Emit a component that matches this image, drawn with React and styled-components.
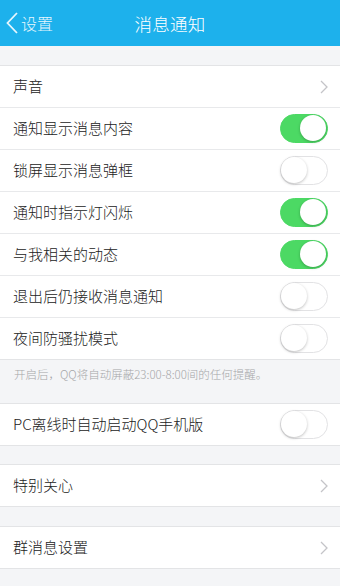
import React, { useState } from 'react'
import styled, { createGlobalStyle } from 'styled-components'

const GlobalStyle = createGlobalStyle`
  body {
    margin: 0;
    background: #f4f5f7;
    font-family: "Noto Sans CJK SC", "Noto Sans", sans-serif;
    font-weight: 300;
  }
`

const Page = styled.div`
  width: 340px;
  min-height: 586px;
  background: #f4f5f7;
`

const Header = styled.div`
  height: 46px;
  background: #1db1ec;
  display: flex;
  align-items: center;
  justify-content: center;
  position: relative;
  color: #fff;
`

const Back = styled.div`
  position: absolute;
  left: 6px;
  top: 0;
  height: 46px;
  display: flex;
  align-items: center;
  gap: 3px;
  font-size: 16px;
  color: #e6f6fd;
`

const Title = styled.div`
  font-size: 17.5px;
  letter-spacing: 0.3px;
`

const Group = styled.div`
  margin-top: ${p => p.gap}px;
  background: #fff;
  border-top: 1px solid #e3e4e6;
  border-bottom: 1px solid #e3e4e6;
`

const Row = styled.div`
  height: 41px;
  display: flex;
  align-items: center;
  justify-content: space-between;
  padding: 0 12px 0 13px;
  border-top: ${p => (p.first ? 'none' : '1px solid #e8e9eb')};
  font-size: 15px;
  color: #222;
`

const Label = styled.span`
  margin-top: -2px;
`

const Note = styled.div`
  height: 43px;
  padding: 6px 14px 0;
  box-sizing: border-box;
  font-size: 11.5px;
  color: #a5a6a8;
`

const Track = styled.div`
  width: 48px;
  height: 29px;
  border-radius: 15px;
  box-sizing: border-box;
  background: ${p => (p.on ? '#4cd964' : '#fff')};
  border: 1.5px solid ${p => (p.on ? '#4cd964' : '#e2e2e4')};
  position: relative;
  cursor: pointer;
`

const Knob = styled.div`
  position: absolute;
  top: 0;
  left: ${p => (p.on ? '19px' : '0')};
  width: 26px;
  height: 26px;
  border-radius: 50%;
  background: #fff;
  box-shadow: 0 1px 3px rgba(0, 0, 0, 0.25);
`

const Toggle = ({ initial }) => {
  const [on, setOn] = useState(initial)
  return (
    <Track on={on} onClick={() => setOn(!on)}>
      <Knob on={on} />
    </Track>
  )
}

const Chevron = () => (
  <svg width="8" height="14" viewBox="0 0 8 14">
    <path d="M1 1l6 6-6 6" fill="none" stroke="#c4c4c8" strokeWidth="1.3" />
  </svg>
)

const switches = [
  ['通知显示消息内容', true],
  ['锁屏显示消息弹框', false],
  ['通知时指示灯闪烁', true],
  ['与我相关的动态', true],
  ['退出后仍接收消息通知', false],
  ['夜间防骚扰模式', false]
]

const App = () => (
  <Page>
    <GlobalStyle />
    <Header>
      <Back>
        <svg width="12" height="22" viewBox="0 0 12 22">
          <path d="M11 1L1.5 11 11 21" fill="none" stroke="#e6f6fd" strokeWidth="1.8" />
        </svg>
        设置
      </Back>
      <Title>消息通知</Title>
    </Header>

    <Group gap={19}>
      <Row first>
        <Label>声音</Label>
        <Chevron />
      </Row>
      {switches.map(([label, on]) => (
        <Row key={label}>
          <Label>{label}</Label>
          <Toggle initial={on} />
        </Row>
      ))}
    </Group>
    <Note>开启后，QQ将自动屏蔽23:00-8:00间的任何提醒。</Note>

    <Group gap={0}>
      <Row first>
        <Label>PC离线时自动启动QQ手机版</Label>
        <Toggle initial={false} />
      </Row>
    </Group>

    <Group gap={18}>
      <Row first>
        <Label>特别关心</Label>
        <Chevron />
      </Row>
    </Group>

    <Group gap={19}>
      <Row first>
        <Label>群消息设置</Label>
        <Chevron />
      </Row>
    </Group>
  </Page>
)

export default App
